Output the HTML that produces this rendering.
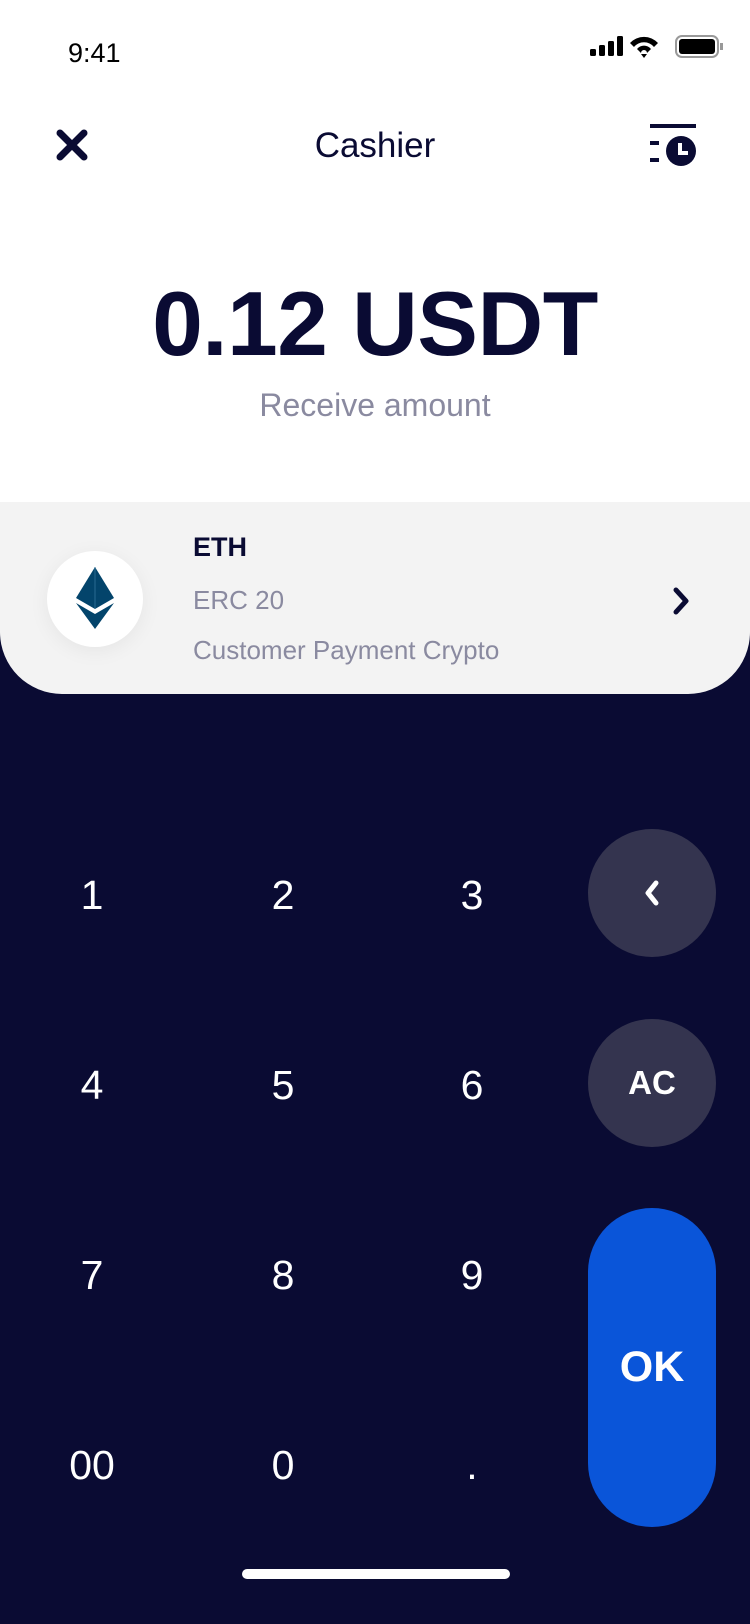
<!DOCTYPE html>
<html><head><meta charset="utf-8"><style>
*{margin:0;padding:0;box-sizing:border-box}
body{width:750px;height:1624px;position:relative;overflow:hidden;background:#fff;font-family:"Liberation Sans",sans-serif}
.a{position:absolute}
.dark{left:0;top:600px;width:750px;height:1024px;background:#0a0b33}
.card{left:0;top:502px;width:750px;height:192px;background:#f3f3f3;border-radius:0 0 62px 62px}
.key{position:absolute;color:#fff;font-size:41px;width:120px;text-align:center;margin-left:-60px;line-height:48px;margin-top:-24px}
.btn{position:absolute;width:128px;height:128px;border-radius:64px;background:#34344f;color:#fff;display:flex;align-items:center;justify-content:center;font-weight:bold;font-size:33px}
</style></head><body>
<div class="a" style="left:68px;top:38px;font-size:27px;color:#000">9:41</div>
<svg class="a" style="left:590px;top:34px" width="134" height="26" viewBox="0 0 134 26">
<rect x="0" y="15" width="6" height="7" rx="1.5"/><rect x="9" y="11" width="6" height="11" rx="1.5"/><rect x="18" y="7" width="6" height="15" rx="1.5"/><rect x="27" y="2" width="6" height="20" rx="1.5"/>
<path d="M40 9 A19 19 0 0 1 68 9 L64 13 A13 13 0 0 0 44 13Z"/><path d="M47 15 A9 9 0 0 1 61 15 L57 19 A3 3 0 0 0 51 19Z"/><path d="M51 20 L54 24 L57 20Z"/>
<rect x="86" y="2" width="42" height="21" rx="6" fill="none" stroke="#999" stroke-width="2"/><rect x="89" y="5" width="36" height="15" rx="3"/><rect x="130" y="9" width="3" height="7" fill="#999"/>
</svg>
<svg class="a" style="left:55px;top:128px" width="34" height="34" viewBox="0 0 34 34"><path d="M5 5L29 29M29 5L5 29" stroke="#0a0b33" stroke-width="7" stroke-linecap="round"/></svg>
<div class="a" style="left:0;width:750px;text-align:center;top:126px;font-size:35px;color:#0a0b33">Cashier</div>
<svg class="a" style="left:650px;top:124px" width="52" height="44" viewBox="0 0 52 44"><rect x="0" y="0" width="46" height="4" fill="#0a0b33"/><rect x="0" y="17" width="9" height="4" fill="#0a0b33"/><rect x="0" y="34" width="9" height="4" fill="#0a0b33"/><circle cx="31" cy="27" r="15" fill="#0a0b33"/><path d="M30 19V29H38" stroke="#fff" stroke-width="4" fill="none"/></svg>
<div class="a" style="left:0;width:750px;text-align:center;top:273px;font-size:91px;font-weight:bold;color:#0a0b33;letter-spacing:-0.5px">0.12 USDT</div>
<div class="a" style="left:0;width:750px;text-align:center;top:387px;font-size:32px;color:#8a8aa0">Receive amount</div>
<div class="a dark"></div>
<div class="a card"></div>
<div class="a" style="left:47px;top:551px;width:96px;height:96px;border-radius:48px;background:#fff;box-shadow:0 4px 20px rgba(0,0,0,0.06)"></div>
<svg class="a" style="left:76px;top:567px" width="38" height="62" viewBox="0 0 38 62"><path d="M19 0L0 31L19 42L38 31Z" fill="#03446b"/><path d="M19 0V42" stroke="#2a6a90" stroke-width="1"/><path d="M0 36L19 47L38 36L19 62Z" fill="#03446b"/></svg>
<div class="a" style="left:193px;top:532px;font-size:27px;font-weight:bold;color:#0a0b33">ETH</div>
<div class="a" style="left:193px;top:585px;font-size:26px;color:#8a8aa0">ERC 20</div>
<div class="a" style="left:193px;top:635px;font-size:26px;color:#8a8aa0">Customer Payment Crypto</div>
<svg class="a" style="left:672px;top:586px" width="18" height="30" viewBox="0 0 18 30"><path d="M4 4L14 15L4 26" stroke="#0a0b33" stroke-width="5" fill="none" stroke-linecap="round" stroke-linejoin="round"/></svg>
<div class="key" style="left:92px;top:895px">1</div><div class="key" style="left:283px;top:895px">2</div><div class="key" style="left:472px;top:895px">3</div>
<div class="key" style="left:92px;top:1085px">4</div><div class="key" style="left:283px;top:1085px">5</div><div class="key" style="left:472px;top:1085px">6</div>
<div class="key" style="left:92px;top:1275px">7</div><div class="key" style="left:283px;top:1275px">8</div><div class="key" style="left:472px;top:1275px">9</div>
<div class="key" style="left:92px;top:1465px">00</div><div class="key" style="left:283px;top:1465px">0</div><div class="key" style="left:472px;top:1465px">.</div>
<div class="btn" style="left:588px;top:829px"><svg width="18" height="28" viewBox="0 0 18 28"><path d="M13 4L5 14L13 24" stroke="#fff" stroke-width="5" fill="none" stroke-linecap="round" stroke-linejoin="round"/></svg></div>
<div class="btn" style="left:588px;top:1019px">AC</div>
<div class="btn" style="left:588px;top:1208px;height:319px;background:#0a55d9;font-size:43px">OK</div>
<div class="a" style="left:242px;top:1569px;width:268px;height:10px;border-radius:5px;background:#fff"></div>
</body></html>
